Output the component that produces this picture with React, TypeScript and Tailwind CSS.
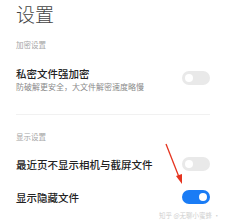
import React from 'react';

const Toggle: React.FC<{ on?: boolean }> = ({ on }) => (
  <div
    className={
      on
        ? 'w-[28px] h-[14px] rounded-full bg-[#1a7cf5] flex items-center justify-end pr-[3px] shrink-0'
        : 'w-[28px] h-[14px] rounded-full bg-[#e9e9e9] flex items-center justify-start pl-[3px] shrink-0'
    }
  >
    <div className="w-[8px] h-[8px] rounded-full bg-white" />
  </div>
);

const App: React.FC = () => {
  return (
    <div
      className="relative w-[227px] h-[222px] bg-white overflow-hidden"
      style={{ fontFamily: '"Noto Sans CJK SC", "Noto Sans", sans-serif' }}
    >
      <div className="flex flex-col pl-[16px] pr-[17px]">
        <div className="mt-[4px] text-[19px] leading-[19px] font-light text-[#444]">设置</div>

        <div className="mt-[18px] text-[7.5px] leading-[8px] text-[#a5a5a5]">加密设置</div>

        <div className="mt-[19px] flex items-start justify-between">
          <div className="flex flex-col">
            <div className="text-[10.5px] leading-[11px] font-medium text-[#222]">私密文件强加密</div>
            <div className="mt-[4px] text-[8px] leading-[8px] text-[#8a8a8a]">
              防破解更安全，大文件解密速度略慢
            </div>
          </div>
          <div className="mt-[3px]">
            <Toggle />
          </div>
        </div>

        <div className="mt-[23px] h-px bg-[#f1f1f1]" />

        <div className="mt-[18px] text-[7.5px] leading-[8px] text-[#a5a5a5]">显示设置</div>

        <div className="mt-[16px] h-[14px] flex items-center justify-between">
          <div className="text-[10.5px] leading-[11px] font-medium text-[#222]">最近页不显示相机与截屏文件</div>
          <Toggle />
        </div>

        <div className="mt-[19px] h-[14px] flex items-center justify-between">
          <div className="text-[10.5px] leading-[11px] font-medium text-[#222]">显示隐藏文件</div>
          <Toggle on />
        </div>
      </div>

      <div className="mt-[7px] pr-[7px] text-right text-[6.5px] leading-[8px] text-[#cfcfcf]">
        知乎 @无聊小蜜蜂 ·
      </div>

      {/* red annotation arrow */}
      <svg className="absolute left-0 top-0 pointer-events-none" width="227" height="222" viewBox="0 0 227 222">
        <line x1="166" y1="144" x2="179" y2="177" stroke="#e5341f" strokeWidth="1.3" />
        <polygon points="182,184 176,176 182,174" fill="#e5341f" />
      </svg>
    </div>
  );
};

export default App;
